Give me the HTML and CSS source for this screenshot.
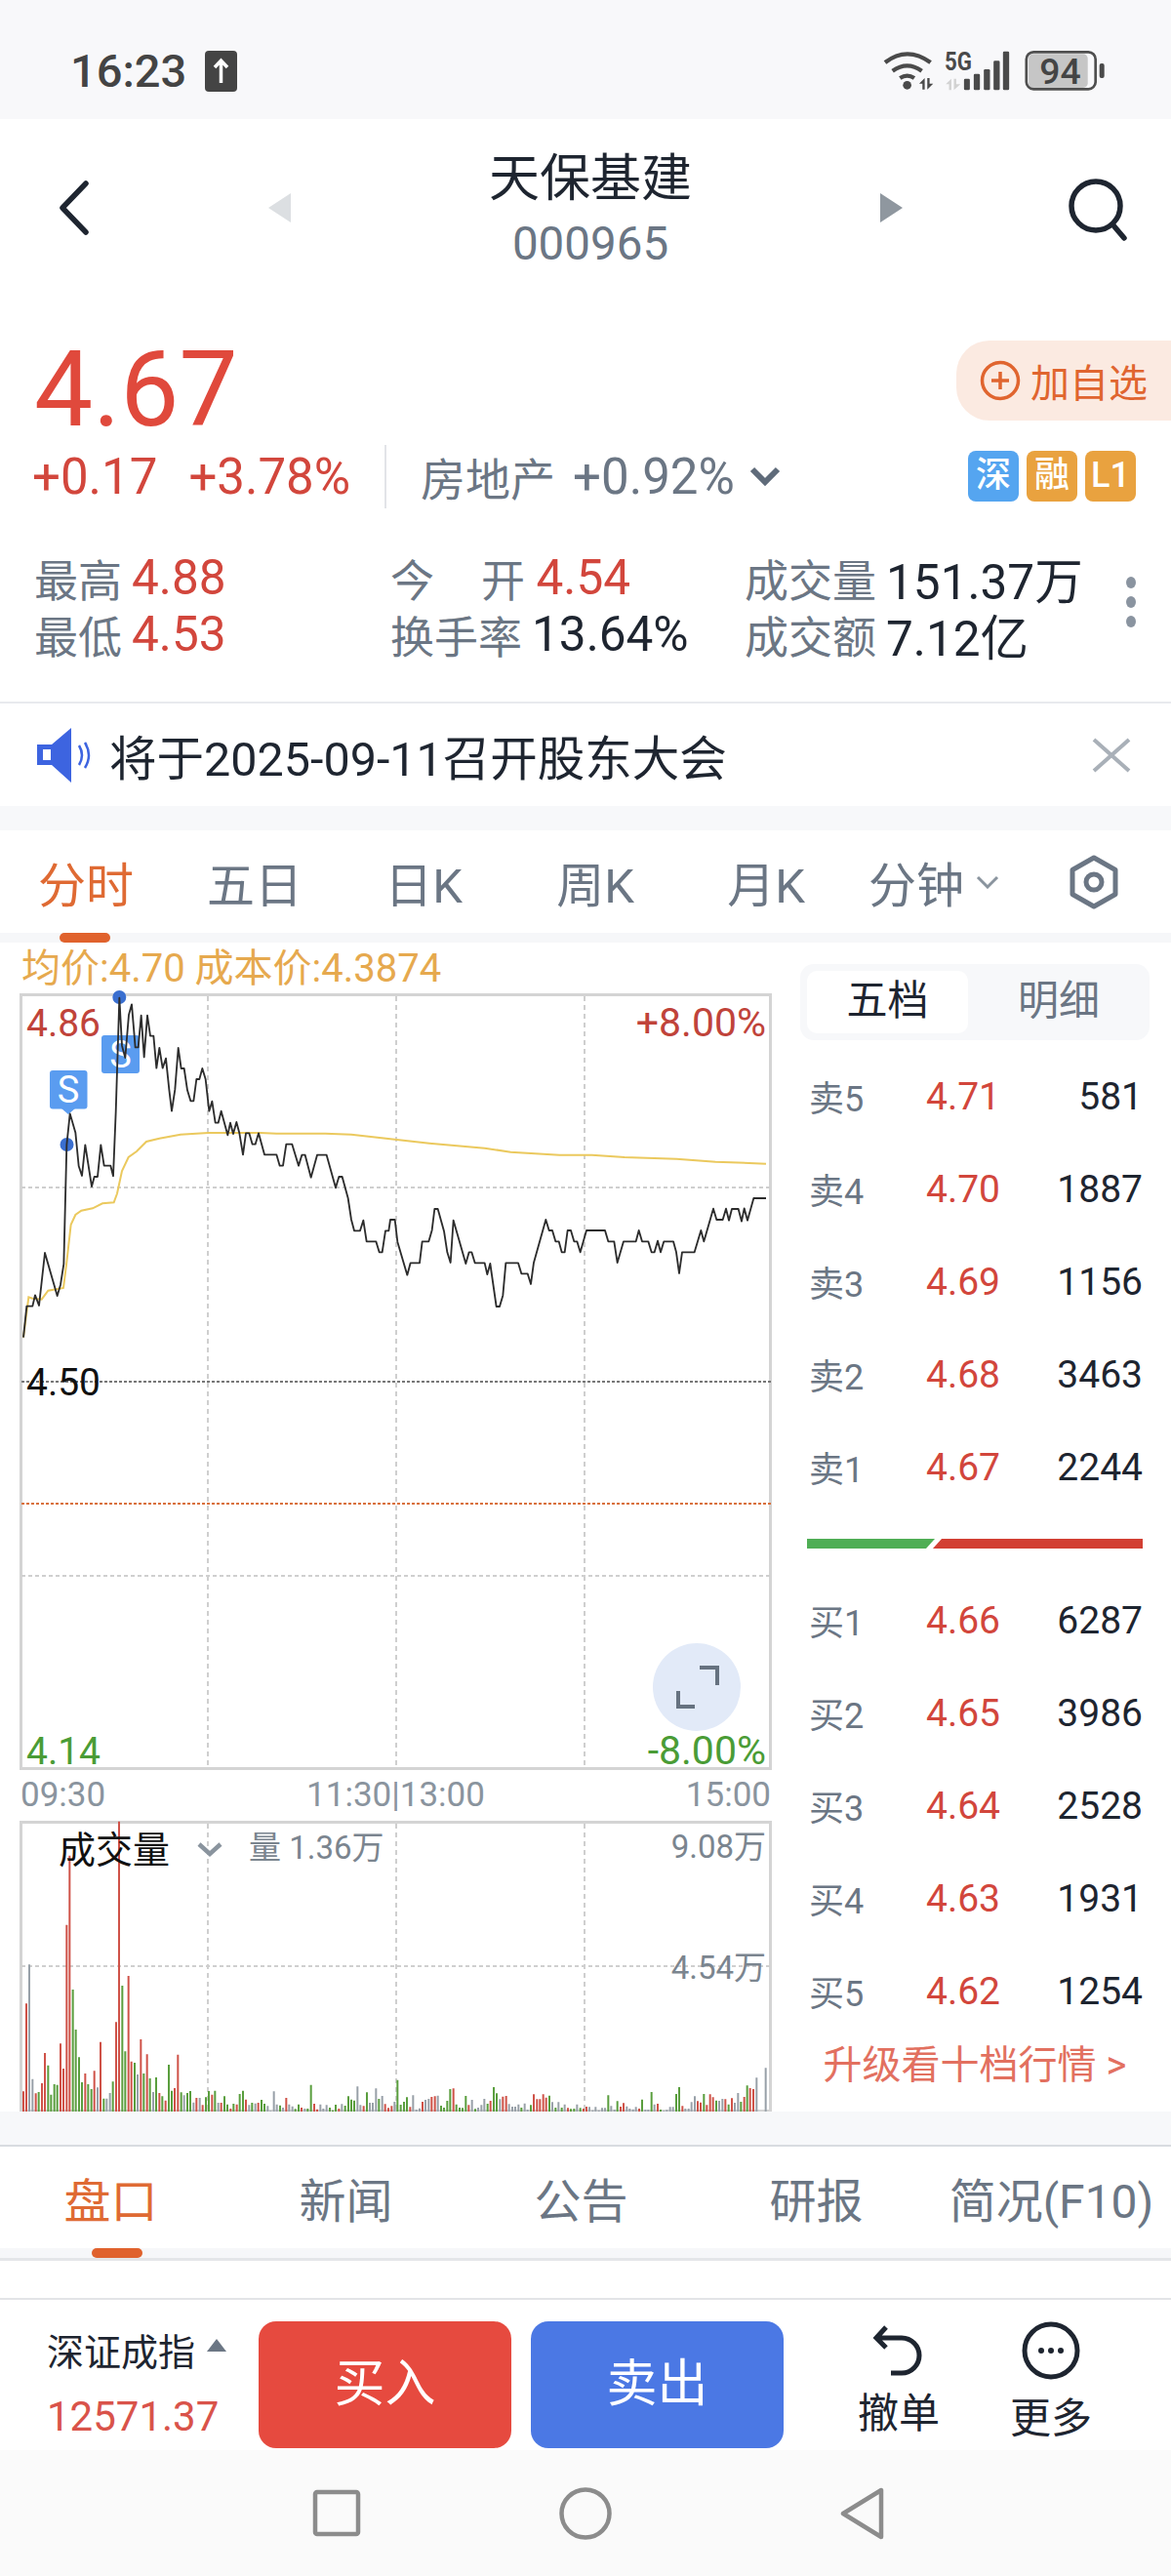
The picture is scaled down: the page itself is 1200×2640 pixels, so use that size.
FILE: index.html
```html
<!DOCTYPE html>
<html lang="zh-CN">
<head>
  <meta charset="UTF-8" />
  <meta name="viewport" content="width=device-width, initial-scale=1.0"/>
  <title>天保基建 000965</title>
  <link rel="stylesheet" href="styles.css">
</head>
<body>

  <!-- STATUS BAR -->
  <div class="status-bar">
    <span class="clock">16:23</span>
    <svg class="upload-box" viewBox="0 0 33 42"><rect width="33" height="42" rx="4" fill="#444"/><path d="M16.500 33V10M10 17l6.500-7 6.500 7" fill="none" stroke="#fff" stroke-width="3.500"/></svg>
    <svg class="status-icons" viewBox="310 30 700 180">
      <g fill="none" stroke="#4a4a4a" stroke-width="13">
        <path d="M322 102q68-52 140 0"/>
        <path d="M345 128q45-32 90 0"/>
        <path d="M368 150q22-14 44 0"/>
      </g>
      <circle cx="390" cy="172" r="13" fill="#4a4a4a"/>
      <path d="M444 150v35h-7v-18h-10zM452 150v35l18-18h-11v-17z" fill="#4a4a4a"/>
      <path d="M526 152v35h-7v-18h-10zM534 152v35l20-18h-13v-17z" fill="#d2d2d2"/>
      <text class="five-g" x="505" y="127" textLength="84" lengthAdjust="spacingAndGlyphs">5G</text>
      <g fill="#4a4a4a">
        <rect x="565" y="152" width="18" height="35" rx="4"/>
        <rect x="595" y="137" width="19" height="50" rx="4"/>
        <rect x="626" y="123" width="19" height="64" rx="4"/>
        <rect x="656" y="97" width="19" height="90" rx="4"/>
        <rect x="685" y="68" width="19" height="119" rx="4"/>
        <rect x="982" y="105" width="15" height="45" rx="6"/>
      </g>
      <rect x="764" y="76" width="182" height="104" rx="14" fill="#c6c6c6"/>
      <rect x="757" y="70" width="213" height="114" rx="22" fill="none" stroke="#4f4f4f" stroke-width="8"/>
      <text class="battery-num" x="861" y="168">94</text>
    </svg>
  </div>

  <!-- HEADER -->
  <div class="stock-head">
    <svg class="back-icon" viewBox="0 0 34 56"><path d="M29 3L5 28l24 25" fill="none" stroke="#1e2530" stroke-width="5.500" stroke-linecap="round" stroke-linejoin="round"/></svg>
    <svg class="tri-icon" viewBox="0 0 23 30"><path d="M23 0v30L0 15z" fill="#dcdfe2"/></svg>
    <div class="stock-name">
      <div class="name">天保基建</div>
      <div class="code">000965</div>
    </div>
    <svg class="tri-icon" viewBox="0 0 23 30"><path d="M0 0v30l23-15z" fill="#8f979f"/></svg>
    <svg class="search-icon" viewBox="0 0 62 64"><circle cx="29" cy="28" r="25" fill="none" stroke="#1e2530" stroke-width="5.500"/><path d="M47 48l11 13" stroke="#1e2530" stroke-width="5.500" stroke-linecap="round"/></svg>
  </div>

  <!-- QUOTE -->
  <div class="quote">
    <div class="price-row">
      <div class="price">4.67</div>
      <div class="watch-pill">
        <svg viewBox="0 0 42 42"><circle cx="21" cy="21" r="18.500" fill="none" stroke="#e0652f" stroke-width="3.500"/><path d="M21 12v18M12 21h18" stroke="#e0652f" stroke-width="3.500"/></svg>
        <span>加自选</span>
      </div>
    </div>
    <div class="change-row">
      <span class="red">+0.17</span>
      <span class="red change-pct">+3.78%</span>
      <span class="divider"></span>
      <span class="sector">房地产</span>
      <span class="sector-pct">+0.92%</span>
      <svg class="sector-chev" viewBox="0 0 34 22"><path d="M4 4l13 13L30 4" fill="none" stroke="#5f6b7a" stroke-width="6"/></svg>
      <div class="badges">
        <span class="badge blue">深</span>
        <span class="badge orange">融</span>
        <span class="badge orange">L1</span>
      </div>
    </div>
    <div class="stats">
      <div class="stat"><span class="lbl">最高</span><span class="red">4.88</span></div>
      <div class="stat"><span class="lbl lbl-wide">今　开</span><span class="red">4.54</span></div>
      <div class="stat"><span class="lbl">成交量</span><span>151.37万</span></div>
      <div class="stat"><span class="lbl">最低</span><span class="red">4.53</span></div>
      <div class="stat"><span class="lbl">换手率</span><span>13.64%</span></div>
      <div class="stat"><span class="lbl">成交额</span><span>7.12亿</span></div>
      <div class="more-dots"><i></i><i></i><i></i></div>
    </div>
  </div>

  <!-- NOTICE -->
  <div class="notice">
    <svg class="speaker" viewBox="0 0 60 60">
      <path d="M36 2v56L16 40H1V19h15z" fill="#3d64e0"/>
      <rect x="7" y="24" width="8" height="11" fill="#fff"/>
      <path d="M44 20q6 10 0 20M50 17q8 13 0 26" fill="none" stroke="#3d64e0" stroke-width="2.500"/>
    </svg>
    <span class="notice-text">将于2025-09-11召开股东大会</span>
    <svg class="close-x" viewBox="0 0 40 36"><path d="M2 2l36 32M38 2L2 34" stroke="#a9b0b8" stroke-width="4"/></svg>
  </div>

  <div class="gap"></div>

  <!-- CHART TABS -->
  <div class="chart-tabs">
    <span class="on">分时</span>
    <span>五日</span>
    <span>日K</span>
    <span>周K</span>
    <span>月K</span>
    <span>分钟<svg class="small-chev" viewBox="0 0 24 14"><path d="M2 2l10 10L22 2" fill="none" stroke="#8a949e" stroke-width="3"/></svg></span>
    <span><svg class="hex-icon" viewBox="0 0 52 56"><path d="M26 3l22 12.500v25L26 53 4 40.500v-25z" fill="none" stroke="#6b7684" stroke-width="5" stroke-linejoin="round"/><circle cx="26" cy="28" r="8" fill="none" stroke="#6b7684" stroke-width="5"/></svg></span>
  </div>
  <div class="strip"><i class="strip-mark strip-mark-a"></i></div>

  <!-- CHART + ORDER BOOK -->
  <div class="main">
    <div class="chart-col">
      <div class="legend">均价:4.70 成本价:4.3874</div>

      <svg class="price-chart" viewBox="0 1015 800 810">
        <rect x="21.500" y="1019.500" width="768" height="793" fill="#fff" stroke="#d4d4d4" stroke-width="3"/>
        <path class="grid-v" d="M213 1021V1812M406 1021V1812M599 1021V1812"/>
        <path class="grid-h" d="M22 1217H790M22 1615H790"/>
        <path class="grid-dark" d="M22 1416H790"/>
        <path class="grid-cost" d="M22 1541H790"/>

        <text class="lab red-t" x="27" y="1062">4.86</text>
        <text class="lab lab-pct red-t end" x="785" y="1062">+8.00%</text>
        <text class="lab" x="27" y="1430">4.50</text>
        <text class="lab green-t" x="27" y="1808">4.14</text>
        <text class="lab lab-pct green-t end" x="785" y="1808">-8.00%</text>

        <rect class="s-box" x="51" y="1097" width="38.500" height="39.500" rx="3"/>
        <path class="s-box" d="M63 1136h14l-7 6z"/>
        <text class="s-text" x="70" y="1130">S</text>
        <rect class="s-box" x="104" y="1061" width="39" height="39" rx="3"/>
        <text class="s-text" x="123.500" y="1094">S</text>
        <circle class="s-dot" cx="68.500" cy="1173" r="7"/>
        <circle class="s-dot" cx="122.300" cy="1022" r="7"/>

        <g transform="translate(0 1000) scale(.33333)">
          <polyline class="avg-line" points="72,1112 88,988 100,992 128,995 148,968 195,960 205,880 218,765 232,735 250,722 285,715 315,700 350,697 360,670 375,600 395,558 420,540 450,510 490,500 555,488 640,483 800,483 850,485 1000,485 1080,488 1200,502 1320,515 1490,530 1570,542 1720,551 1820,551 1920,558 2080,563 2200,572 2355,578"/>
          <polyline class="px-line" points="72,1112 82,1016 100,1016 108,982 120,1014 138,852 176,984 186,950 196,886 205,520 215,424 232,482 242,585 252,615 262,520 282,648 290,618 300,618 310,520 320,584 340,584 348,616 356,420 367,68 375,215 385,252 396,120 405,88 416,220 425,220 434,122 443,250 453,122 462,185 472,185 481,284 490,222 500,284 510,254 520,350 528,416 538,350 548,222 557,285 566,285 576,352 586,385 595,385 604,318 613,318 622,285 632,318 643,416 652,386 662,452 671,452 680,416 700,490 708,452 717,486 727,450 736,484 747,550 756,484 766,484 776,518 785,518 795,484 813,550 850,550 860,584 870,584 880,518 898,518 918,584 928,551 938,551 956,620 975,551 1004,551 1032,652 1042,618 1052,618 1070,684 1080,750 1089,784 1107,784 1117,752 1127,817 1156,817 1166,850 1175,850 1185,784 1195,784 1200,750 1214,750 1222,818 1252,920 1262,883 1290,883 1298,817 1318,817 1328,782 1336,717 1346,717 1365,785 1375,850 1385,882 1394,752 1432,885 1442,850 1450,850 1460,883 1490,883 1498,918 1507,885 1526,1017 1536,1017 1546,983 1555,883 1593,883 1603,916 1622,916 1632,948 1641,882 1678,750 1688,783 1698,783 1708,817 1718,817 1727,850 1736,850 1745,783 1755,783 1765,817 1774,817 1784,850 1803,783 1860,783 1870,817 1888,817 1898,882 1917,817 1955,817 1964,783 1974,817 1993,817 2003,850 2012,850 2022,815 2031,850 2041,817 2070,817 2079,850 2088,915 2097,850 2135,850 2155,783 2164,817 2193,716 2203,750 2222,750 2232,716 2241,752 2250,717 2270,717 2280,755 2288,715 2298,752 2317,684 2355,684"/>
        </g>

        <circle cx="714" cy="1729" r="45" fill="#e2eaf8"/>
        <path d="M717 1709h18v18M695 1733v16h17" fill="none" stroke="#667280" stroke-width="4"/>
      </svg>

      <div class="time-axis"><span>09:30</span><span>11:30|13:00</span><span>15:00</span></div>

      <svg class="vol-chart" viewBox="0 1862 800 302">
        <rect x="21.500" y="1867.500" width="768" height="296" fill="#fff" stroke="#d4d4d4" stroke-width="3"/>
        <path class="grid-v" d="M213 1869V2162M406 1869V2162M599 1869V2162"/>
        <path class="grid-h" d="M22 2015H790"/>
        <!-- bars, drawn in 3x units so they read straight off the crops -->
        <g transform="translate(20 1860) scale(.33333)">
          <path class="bar-r" d="M12 912V850M21 912V580M50 912V856M69 912V825M78 912V732M126 912V703M135 912V780M145 912V338M154 912V125M202 912V795M230 912V787M249 912V698M297 912V637M306 912V20M335 912V495M344 912V758M373 912V690M392 912V736M430 912V855M449 912V878M477 912V840M487 912V737M544 912V870M563 912V892M592 912V860M620 912V885M649 912V903M668 912V890M696 912V875M734 912V885M820 912V870M867 912V900"/>
          <path class="bar-g" d="M59 912V852M88 912V770M97 912V860M107 912V828M116 912V830M164 912V537M173 912V660M183 912V745M192 912V822M211 912V828M221 912V843M259 912V872M287 912V820M316 912V525M325 912V727M354 912V762M382 912V795M401 912V810M420 912V807M439 912V865M459 912V768M468 912V848M497 912V853M516 912V855M525 912V849M573 912V868M582 912V849M601 912V848M630 912V865M639 912V890M658 912V888M677 912V858M687 912V848M715 912V885M744 912V876M753 912V888M801 912V893M848 912V904M858 912V890M886 912V903M896 912V830"/>
          <path class="bar-n" d="M30 912V460M40 912V812M240 912V838M268 912V872M278 912V855M363 912V798M411 912V852M506 912V862M535 912V884M554 912V870M611 912V885M706 912V892M725 912V887M763 912V895M772 912V910M782 912V850M791 912V890M810 912V900M829 912V890M839 912V896M877 912V903"/>
        </g>
        <g transform="translate(310 2040) scale(.33333)">
          <path class="bar-r" d="M36 372V348M45 372V365M112 372V363M188 372V355M254 372V349M264 372V361M274 372V355M331 372V358M369 372V342M397 372V327M407 372V325M464 372V301M511 372V352M578 372V339M616 372V326M626 372V324M711 372V319M721 372V334M730 372V334M740 372V319M749 372V329M816 372V361M864 372V363M873 372V357M978 372V357M987 372V346M1035 372V363M1092 372V348M1168 372V355M1215 372V340M1224 372V344M1243 372V352M1253 372V319M1262 372V328M1300 372V334M1320 372V331M1358 372V327M1376 372V300M1386 372V303"/>
          <path class="bar-g" d="M84 372V360M93 372V368M102 372V351M131 372V354M141 372V325M150 372V335M159 372V338M198 372V313M235 372V333M292 372V275M302 372V351M312 372V342M321 372V328M426 372V354M435 372V360M445 372V339M454 372V303M473 372V350M483 372V360M492 372V361M502 372V324M531 372V364M569 372V348M588 372V297M597 372V316M673 372V360M702 372V352M759 372V323M778 372V360M797 372V360M825 372V364M835 372V363M854 372V361M940 372V322M968 372V340M1044 372V335M1073 372V312M1101 372V366M1149 372V318M1158 372V297M1234 372V318M1272 372V338M1310 372V350M1348 372V342M1367 372V292"/>
          <path class="bar-n" d="M55 372V350M64 372V363M74 372V352M121 372V349M169 372V295M178 372V352M207 372V345M216 372V345M226 372V301M245 372V324M283 372V342M340 372V322M350 372V366M360 372V362M378 372V336M388 372V333M416 372V323M521 372V336M540 372V360M550 372V352M559 372V333M607 372V334M635 372V349M645 372V357M654 372V357M664 372V350M683 372V347M692 372V366M768 372V343M787 372V343M806 372V350M844 372V350M882 372V358M892 372V368M901 372V358M911 372V368M921 372V361M930 372V361M949 372V355M959 372V366M997 372V356M1006 372V363M1016 372V365M1025 372V358M1054 372V366M1063 372V366M1082 372V350M1111 372V370M1120 372V367M1130 372V358M1139 372V358M1177 372V363M1187 372V363M1196 372V343M1206 372V325M1281 372V339M1291 372V333M1329 372V345M1339 372V315M1396 372V268M1424 372V238"/>
        </g>
        <text class="vol-name" x="60" y="1909">成交量</text>
        <path d="M204 1890l11 10 11-10" fill="none" stroke="#8a949e" stroke-width="4.500"/>
        <text class="vol-val" x="255" y="1905">量 1.36万</text>
        <text class="vol-val end" x="785" y="1904">9.08万</text>
        <text class="vol-val end" x="785" y="2028">4.54万</text>
      </svg>
    </div>

    <div class="book-col">
      <div class="seg">
        <span class="seg-on">五档</span>
        <span>明细</span>
      </div>
      <div class="book">
        <div class="book-row"><span class="b-lbl">卖5</span><span class="red">4.71</span><span class="qty">581</span></div>
        <div class="book-row"><span class="b-lbl">卖4</span><span class="red">4.70</span><span class="qty">1887</span></div>
        <div class="book-row"><span class="b-lbl">卖3</span><span class="red">4.69</span><span class="qty">1156</span></div>
        <div class="book-row"><span class="b-lbl">卖2</span><span class="red">4.68</span><span class="qty">3463</span></div>
        <div class="book-row"><span class="b-lbl">卖1</span><span class="red">4.67</span><span class="qty">2244</span></div>
      </div>
      <div class="depth-bar"><i class="depth-g"></i><i class="depth-r"></i></div>
      <div class="book">
        <div class="book-row"><span class="b-lbl">买1</span><span class="red">4.66</span><span class="qty">6287</span></div>
        <div class="book-row"><span class="b-lbl">买2</span><span class="red">4.65</span><span class="qty">3986</span></div>
        <div class="book-row"><span class="b-lbl">买3</span><span class="red">4.64</span><span class="qty">2528</span></div>
        <div class="book-row"><span class="b-lbl">买4</span><span class="red">4.63</span><span class="qty">1931</span></div>
        <div class="book-row"><span class="b-lbl">买5</span><span class="red">4.62</span><span class="qty">1254</span></div>
      </div>
      <div class="upgrade">升级看十档行情 &gt;</div>
    </div>
  </div>

  <!-- INFO TABS -->
  <div class="tray"></div>
  <div class="info-tabs">
    <span class="on">盘口</span>
    <span>新闻</span>
    <span>公告</span>
    <span>研报</span>
    <span>简况(F10)</span>
  </div>
  <div class="strip strip-b"><i class="strip-mark strip-mark-b"></i></div>
  <div class="spacer"></div>

  <!-- TRADE BAR -->
  <div class="trade-bar">
    <div class="index-box">
      <div class="index-name">深证成指<svg class="index-up" viewBox="0 0 20 13"><path d="M10 0l10 13H0z" fill="#6b7684"/></svg></div>
      <div class="index-val">12571.37</div>
    </div>
    <div class="trade-btn buy">买入</div>
    <div class="trade-btn sell">卖出</div>
    <div class="action action-undo">
      <svg viewBox="0 0 60 60"><path d="M17 6L7 17l10 10M7 17h26a18 18 0 0 1 0 36H22" fill="none" stroke="#1e2530" stroke-width="5"/></svg>
      <span>撤单</span>
    </div>
    <div class="action action-more">
      <svg viewBox="0 0 60 60"><circle cx="30" cy="30" r="27" fill="none" stroke="#1e2530" stroke-width="5"/><circle cx="20" cy="30" r="3" fill="#1e2530"/><circle cx="30" cy="30" r="3" fill="#1e2530"/><circle cx="40" cy="30" r="3" fill="#1e2530"/></svg>
      <span>更多</span>
    </div>
  </div>

  <!-- ANDROID NAV -->
  <div class="sys-nav">
    <svg viewBox="0 0 50 50" class="nav-square"><rect x="3" y="3" width="44" height="43" rx="2" fill="none" stroke="#8c8c8c" stroke-width="4.500"/></svg>
    <svg viewBox="0 0 54 54" class="nav-circle"><circle cx="27" cy="27" r="24.500" fill="none" stroke="#8c8c8c" stroke-width="4.500"/></svg>
    <svg viewBox="0 0 48 54" class="nav-back"><path d="M43 3v48L4 27z" fill="none" stroke="#8c8c8c" stroke-width="4.500" stroke-linejoin="round"/></svg>
  </div>

</body>
</html>
```
FILE: styles.css
```css
* {
  box-sizing: border-box;
}

body {
  margin: 0;
  width: 1200px;
  height: 2640px;
  overflow: hidden;
  background-color: #ffffff;
  color: #1e2530;
  font-family: Roboto, 'Noto Sans CJK SC', sans-serif;
}

svg {
  display: block;
}

.red {
  color: #d2463c;
}

/* status bar */
.status-bar {
  height: 122px;
  background-color: #f8f8fa;
  display: flex;
  align-items: flex-start;
  padding: 50px 0 0 72px;
}

.clock {
  font-size: 47px;
  line-height: 46px;
  font-weight: 500;
  color: #444;
  width: 138px;
}

.upload-box {
  width: 33px;
  height: 42px;
  margin-top: 2px;
}

.status-icons {
  width: 233px;
  height: 60px;
  margin-left: 660px;
  margin-top: -10px;
}

.five-g {
  font-size: 78px;
  font-weight: 700;
  fill: #4a4a4a;
}

.battery-num {
  font-size: 112px;
  font-weight: 500;
  fill: #444;
  text-anchor: middle;
}

/* header */
.stock-head {
  height: 182px;
  display: flex;
  align-items: center;
}

.back-icon {
  width: 34px;
  height: 56px;
  margin-left: 59px;
  margin-right: 182px;
}

.tri-icon {
  width: 23px;
  height: 30px;
}

.stock-name {
  width: 604px;
  padding-left: 10px;
  margin-top: 7px;
  text-align: center;
}

.name {
  font-size: 52px;
  line-height: 60px;
  padding-top: 1px;
  height: 60px;
}

.code {
  font-size: 47.500px;
  line-height: 60px;
  margin-top: 7px;
  color: #6b7684;
}

.search-icon {
  width: 62px;
  height: 64px;
  margin-left: 169px;
  margin-top: 3px;
}

/* quote */
.quote {
  padding-top: 45px;
}

.price-row {
  height: 90px;
  display: flex;
  justify-content: space-between;
  align-items: flex-start;
}

.price {
  font-size: 107px;
  line-height: 82px;
  margin: 10px 0 0 35px;
  color: #e0493c;
}

.watch-pill {
  width: 220px;
  height: 82px;
  background-color: #fbeae1;
  border-radius: 34px 0 0 34px;
  display: flex;
  align-items: center;
  padding-left: 24px;
  gap: 10px;
  color: #e0652f;
  font-size: 40px;
}

.watch-pill svg {
  width: 42px;
  height: 42px;
}

.change-row {
  height: 60px;
  margin-top: 19px;
  display: flex;
  align-items: center;
  padding-left: 33px;
  font-size: 51px;
}

.change-pct {
  margin-left: 32px;
}

.divider {
  width: 2px;
  height: 65px;
  background-color: #e2e4e8;
  margin: 0 35px;
}

.sector {
  color: #6b7684;
  font-size: 46px;
}

.sector-pct {
  color: #6b7684;
  margin-left: 18px;
}

.sector-chev {
  width: 34px;
  height: 22px;
  margin-left: 14px;
}

.badges {
  margin-left: auto;
  margin-right: 36px;
  display: flex;
  gap: 8px;
}

.badge {
  width: 52px;
  height: 52px;
  border-radius: 8px;
  color: #fff;
  font-size: 36px;
  font-weight: 500;
  text-align: center;
  line-height: 50px;
}

.badge.blue {
  background-color: #55a5f0;
}

.badge.orange {
  background-color: #e9a23f;
}

.stats {
  margin-top: 45px;
  padding: 0 0 40px 35px;
  display: grid;
  grid-template-columns: 365px 363px 1fr;
  grid-auto-rows: 58px;
  border-bottom: 2px solid #e8eaee;
  position: relative;
}

.stat {
  display: flex;
  align-items: center;
  gap: 10px;
  font-size: 49.500px;
  white-space: nowrap;
}

.lbl {
  font-size: 45px;
  color: #6b7684;
}

.lbl-wide {
  letter-spacing: 1.500px;
}

.more-dots {
  position: absolute;
  left: 1154px;
  top: 28px;
  display: flex;
  flex-direction: column;
  gap: 8px;
}

.more-dots i {
  width: 10px;
  height: 12px;
  border-radius: 50%;
  background-color: #8a94a0;
}

/* notice */
.notice {
  height: 105px;
  display: flex;
  align-items: center;
  padding-left: 37px;
}

.speaker {
  width: 60px;
  height: 60px;
}

.notice-text {
  font-size: 48.500px;
  margin-left: 15px;
}

.close-x {
  width: 40px;
  height: 36px;
  margin-left: auto;
  margin-right: 41px;
}

.gap {
  height: 25px;
  background-color: #f7f8fa;
}

/* chart tabs */
.chart-tabs {
  height: 105px;
  display: grid;
  grid-template-columns: 176px 170px 176px 176px 174px 170px 1fr;
  align-items: center;
  font-size: 49px;
  color: #6b7684;
}

.chart-tabs span {
  display: flex;
  justify-content: center;
  align-items: center;
}

.on {
  color: #df6a33;
}

.chart-tabs .on {
  color: #df6a33;
}

.small-chev {
  width: 24px;
  height: 14px;
  margin-left: 12px;
}

.hex-icon {
  width: 52px;
  height: 56px;
}

.strip {
  height: 10px;
  background-color: #f6f7f9;
  position: relative;
}

.strip-mark {
  display: block;
  position: absolute;
  top: 0;
  width: 52px;
  height: 10px;
  border-radius: 5px;
  background-color: #e0622d;
}

.strip-mark-a {
  left: 61px;
}

.strip-mark-b {
  left: 94px;
}

/* chart + book */
.main {
  height: 1198px;
  display: flex;
}

.chart-col {
  width: 820px;
  flex: none;
}

.legend {
  height: 49px;
  padding-left: 22px;
  font-size: 40px;
  line-height: 54px;
  color: #e6a94e;
  white-space: nowrap;
}

.price-chart {
  width: 800px;
  height: 810px;
}

.grid-v {
  fill: none;
  stroke: #cfcfcf;
  stroke-width: 2;
  stroke-dasharray: 5 4;
}

.grid-h {
  fill: none;
  stroke: #cfcfcf;
  stroke-width: 2;
  stroke-dasharray: 4 3;
}

.grid-dark {
  fill: none;
  stroke: #777;
  stroke-width: 2;
  stroke-dasharray: 3 2;
}

.grid-cost {
  fill: none;
  stroke: #d9713e;
  stroke-width: 2;
  stroke-dasharray: 3 2;
}

.lab {
  font-size: 39px;
  fill: #111;
}

.lab-pct {
  font-size: 41px;
}

.red-t {
  fill: #c0433a;
}

.green-t {
  fill: #4a9c36;
}

.end {
  text-anchor: end;
}

.s-box {
  fill: #5a9cf0;
}

.s-text {
  font-size: 38px;
  fill: #fff;
  text-anchor: middle;
}

.s-dot {
  fill: #3a6fd0;
}

.avg-line {
  fill: none;
  stroke: #ebc95e;
  stroke-width: 6;
}

.px-line {
  fill: none;
  stroke: #2c2c2c;
  stroke-width: 5.500;
  stroke-linejoin: round;
}

.time-axis {
  width: 790px;
  height: 47px;
  margin-top: -10px;
  padding-left: 21px;
  display: flex;
  justify-content: space-between;
  font-size: 35px;
  line-height: 50px;
  color: #8a949e;
}

.vol-chart {
  width: 800px;
  height: 302px;
}

.bar-r,
.bar-g,
.bar-n {
  fill: none;
  stroke-width: 6;
}

.bar-r {
  stroke: #cf5248;
}

.bar-g {
  stroke: #5a9e3e;
}

.bar-n {
  stroke: #98a0a8;
}

.vol-name {
  font-size: 38px;
  fill: #111;
}

.vol-val {
  font-size: 33px;
  fill: #7b858f;
}

/* order book */
.book-col {
  width: 358px;
  padding-top: 22px;
}

.seg {
  height: 78px;
  background-color: #f7f8fa;
  border-radius: 14px;
  padding: 7px 0 7px 7px;
  display: grid;
  grid-template-columns: 165px 1fr;
  font-size: 42px;
  color: #6b7684;
  text-align: center;
  line-height: 62px;
}

.seg-on {
  background-color: #fff;
  border-radius: 10px;
  color: #1e2530;
}

.book {
  margin-top: 10px;
}

.book-row {
  height: 95px;
  padding: 1px 7px 0 9px;
  display: grid;
  grid-template-columns: 120px 1fr auto;
  align-items: center;
  font-size: 39px;
}

.b-lbl {
  font-size: 36px;
  margin-top: -2px;
  color: #6b7684;
}

.depth-bar {
  display: flex;
  height: 10px;
  margin: 26px 7px 0;
}

.depth-bar + .book {
  margin-top: 26px;
}

.depth-g {
  width: 131px;
  background-color: #4fae55;
  clip-path: polygon(0 0, 100% 0, calc(100% - 9px) 100%, 0 100%);
}

.depth-r {
  width: 215px;
  margin-left: -2px;
  background-color: #d23f33;
  clip-path: polygon(9px 0, 100% 0, 100% 100%, 0 100%);
}

.upgrade {
  height: 58px;
  line-height: 58px;
  text-align: center;
  font-size: 40px;
  color: #e2705f;
  white-space: nowrap;
}

/* info tabs */
.tray {
  height: 36px;
  background-color: #f7f8fa;
  border-bottom: 2px solid #d8dce0;
}

.info-tabs {
  height: 104px;
  margin-left: -7px;
  display: grid;
  grid-template-columns: repeat(5, 241px);
  align-items: center;
  justify-items: center;
  font-size: 48px;
  color: #6b7684;
  white-space: nowrap;
}

.spacer {
  height: 43px;
  border-top: 3px solid #e4e6e9;
  border-bottom: 2px solid #e2e4e7;
}

/* trade bar */
.trade-bar {
  height: 154px;
  display: flex;
  align-items: flex-start;
  padding-top: 22px;
}

.index-box {
  width: 265px;
  padding: 8px 0 0 48px;
  flex: none;
}

.index-name {
  display: flex;
  align-items: center;
  height: 40px;
  font-size: 38px;
}

.index-up {
  width: 20px;
  height: 13px;
  margin-left: 12px;
  margin-top: -8px;
}

.index-val {
  height: 40px;
  line-height: 40px;
  margin-top: 30px;
  font-size: 42px;
  color: #d9534a;
}

.trade-btn {
  width: 259px;
  height: 130px;
  border-radius: 18px;
  color: #fff;
  font-size: 52px;
  text-align: center;
  line-height: 130px;
  flex: none;
}

.trade-btn.buy {
  background-color: #e64a3f;
}

.trade-btn.sell {
  background-color: #4b78e4;
  margin-left: 20px;
}

.action {
  width: 100px;
  display: flex;
  flex-direction: column;
  align-items: center;
  font-size: 42px;
  flex: none;
}

.action svg {
  width: 60px;
  height: 60px;
}

.action span {
  margin-top: 10px;
  line-height: 50px;
}

.action-undo {
  margin-left: 68px;
}

.action-more {
  margin-left: 56px;
}

.action-more span {
  margin-top: 15px;
}

/* system nav */
.sys-nav {
  height: 129px;
  background-color: #fafafa;
  display: flex;
  align-items: center;
  padding-left: 320px;
}

.nav-square {
  width: 50px;
  height: 50px;
}

.nav-circle {
  width: 54px;
  height: 54px;
  margin-left: 203px;
}

.nav-back {
  width: 48px;
  height: 54px;
  margin-left: 233px;
}
```
